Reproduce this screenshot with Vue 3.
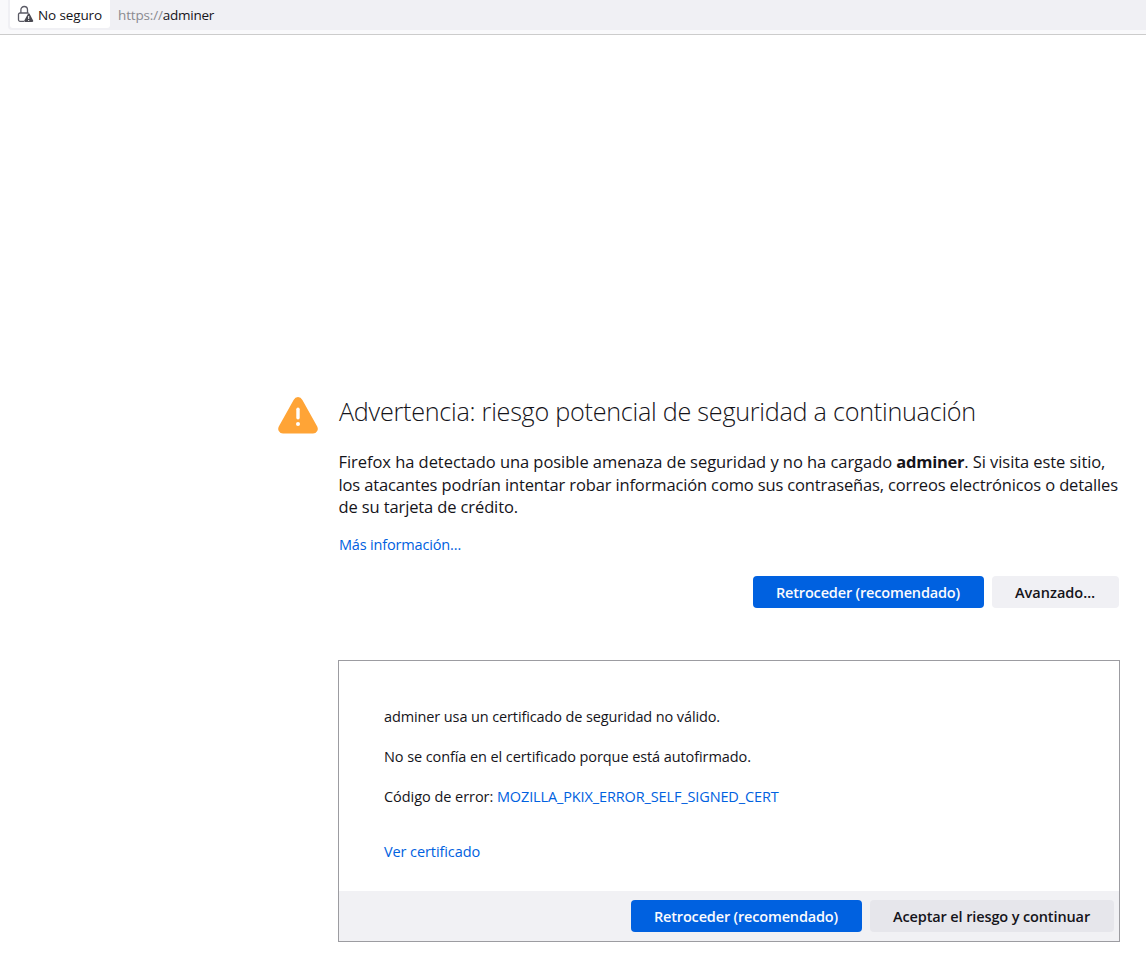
<script setup>
const details = [
  { text: 'adminer usa un certificado de seguridad no válido.', cls: 'd1' },
  { text: 'No se confía en el certificado porque está autofirmado.', cls: 'd2' },
]
</script>

<template>
  <div class="page">
    <header class="toolbar">
      <div class="urlbar">
        <div class="identity">
          <svg class="lock" width="17" height="18" viewBox="0 0 17 18" fill="none">
            <path d="M3.900 8V4.800a3.300 3.300 0 0 1 6.600 0V8" stroke="#5b5b66" stroke-width="1.300" />
            <path d="M7 16.300H3A1.500 1.500 0 0 1 1.500 14.800V9.500A1.500 1.500 0 0 1 3 8H11.500" stroke="#5b5b66" stroke-width="1.300" />
            <path d="M11 8.700 7.300 15.500A1 1 0 0 0 8.200 17H15.200a1 1 0 0 0 .9-1.500L12.600 8.700a.9.9 0 0 0-1.600 0Z" fill="#4a4a52" />
            <path d="M11.700 11v3M11.700 15v1" stroke="#fff" stroke-width="1" />
          </svg>
          <span class="unsafe">No seguro</span>
        </div>
        <span class="url"><span class="scheme">https://</span>adminer</span>
      </div>
    </header>

    <main class="content">
      <section class="warning">
        <svg class="triangle" width="40" height="37" viewBox="0 0 40 37">
          <path d="M15.600 2.900Q17.200 0 20 0Q22.800 0 24.400 2.900L39.200 29.500Q40.400 32 39.200 34Q37.800 36.500 35 36.500H5Q2.200 36.500 .8 34Q-.4 32 .8 29.500Z" fill="#ffa436" />
          <path d="M20 12.200V20.700" stroke="#fff" stroke-width="3.400" stroke-linecap="round" />
          <circle cx="20" cy="26.900" r="2" fill="#fff" />
        </svg>
        <div class="message">
          <h1>Advertencia: riesgo potencial de seguridad a continuación</h1>
          <p class="intro">
            <span class="l1">Firefox ha detectado una posible amenaza de seguridad y no ha cargado <b>adminer</b><span class="tail">. Si visita este sitio,</span></span><br>
            <span class="l2">los atacantes podrían intentar robar información como sus contraseñas, correos electrónicos o detalles</span><br>
            <span class="l3">de su tarjeta de crédito.</span>
          </p>
          <a class="more">Más información…</a>
          <div class="actions">
            <button class="primary">Retroceder (recomendado)</button>
            <button class="advanced">Avanzado…</button>
          </div>
        </div>
      </section>

      <section class="panel">
        <div class="panel-body">
          <p v-for="d in details" :key="d.cls" :class="d.cls">{{ d.text }}</p>
          <p class="code"><span>Código de error: </span><a>MOZILLA_PKIX_ERROR_SELF_SIGNED_CERT</a></p>
          <a class="cert">Ver certificado</a>
        </div>
        <footer class="panel-footer">
          <button class="primary">Retroceder (recomendado)</button>
          <button class="accept">Aceptar el riesgo y continuar</button>
        </footer>
      </section>
    </main>
  </div>
</template>

<style>
body { background: #fff; overflow: hidden; }
</style>

<style scoped>
* { box-sizing: border-box; }
.page {
  width: 1146px;
  height: 958px;
  font-family: "Open Sans", "Noto Sans", sans-serif;
  font-size: 14.5px;
  color: #15141a;
  white-space: nowrap;
}
.toolbar {
  height: 35px;
  padding-left: 8px;
  background: #f9f9fb;
  border-bottom: 1px solid #ccc;
}
.urlbar {
  display: flex;
  height: 30px;
  padding-left: 2px;
  background: #f0f0f4;
  border-bottom-left-radius: 4px;
  font-size: 13.5px;
  line-height: 20px;
}
.identity {
  display: flex;
  width: 100px;
  height: 28px;
  padding: 5px 0 0 7px;
  background: #fff;
  border-radius: 0 0 3px 3px;
}
.lock { flex: none; margin-right: 4px; }
.unsafe { letter-spacing: -0.12px; }
.url { padding: 5px 0 0 8px; letter-spacing: -0.28px; }
.scheme { color: #8a8a90; letter-spacing: -0.15px; }
.content { padding: 359px 0 0 278px; }
.warning { display: flex; }
.triangle { flex: none; margin: 3px 20px 0 0; }
.message { width: 781px; }
h1 {
  margin: 0 0 22px 1px;
  font-size: 25.2px;
  font-weight: 300;
  line-height: 34px;
  letter-spacing: -0.262px;
}
.intro { margin: 0; padding: 1px 0 0 0.5px; font-size: 16.5px; line-height: 22.6px; }
.l1 { letter-spacing: -0.05px; }
.l1 b { letter-spacing: -0.24px; }
.tail { letter-spacing: -0.077px; }
.l2 { letter-spacing: -0.14px; }
.l3 { letter-spacing: -0.12px; }
a { color: #0061e0; }
.more {
  display: block;
  margin: 15px 0 0 1px;
  line-height: 22px;
  letter-spacing: -0.175px;
}
.actions { display: flex; justify-content: flex-end; gap: 8px; margin-top: 20px; }
button {
  height: 32px;
  padding: 1px 1px 0 0;
  border: 0;
  border-radius: 4px;
  font: 600 14.5px/31px "Open Sans", "Noto Sans", sans-serif;
  color: #15141a;
}
.primary { width: 231px; background: #0061e0; color: #fbfbfe; letter-spacing: -0.167px; }
.advanced { width: 127px; background: #f0f0f4; }
.panel {
  width: 782px;
  height: 282px;
  margin: 52px 0 0 60px;
  border: 1px solid #9c9ca1;
}
.panel-body { height: 230px; padding: 46px 0 0 45px; line-height: 20px; }
.panel-body p { margin: 0 0 20px; }
.d1 { letter-spacing: -0.116px; }
.d2 { letter-spacing: -0.087px; }
.code span { letter-spacing: -0.047px; }
.code a { letter-spacing: -0.13px; }
.cert { display: block; margin-top: 35px; letter-spacing: -0.09px; }
.panel-footer {
  display: flex;
  justify-content: flex-end;
  gap: 8px;
  height: 50px;
  padding: 9px 5px 0 0;
  background: #f1f1f4;
}
.accept { width: 244px; background: #e6e6eb; letter-spacing: -0.12px; }
</style>
